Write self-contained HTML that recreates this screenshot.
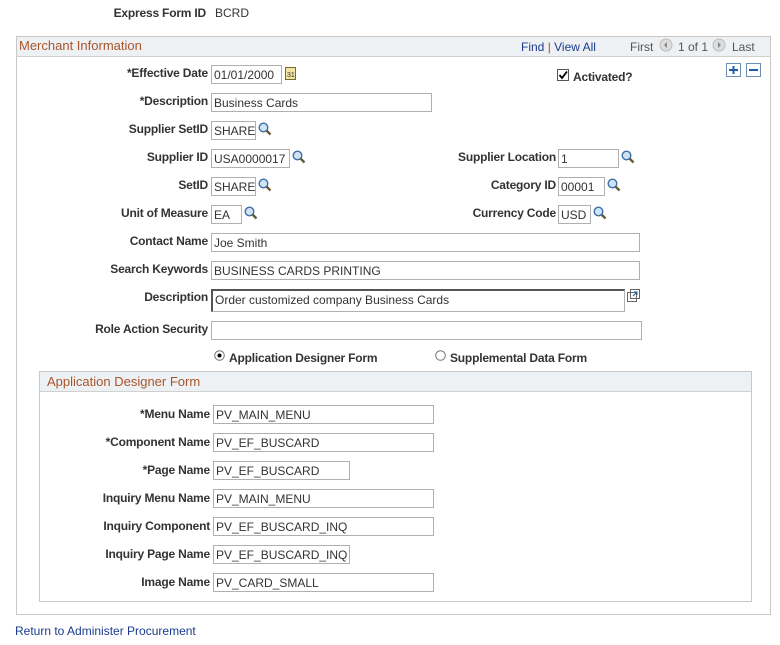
<!DOCTYPE html>
<html><head><style>
body{margin:0;width:780px;height:645px;background:#fff;font-family:"Liberation Sans",Arial,sans-serif;font-size:12px;color:#333;position:relative;overflow:hidden}
.a{position:absolute;white-space:nowrap}
.l{position:absolute;font-weight:bold;text-align:right;white-space:nowrap;color:#333;letter-spacing:-0.2px}
.i{position:absolute;border:1px solid #b0b0b0;box-sizing:border-box;height:19px;padding:2px 2px 0;font-size:12px;color:#333;background:#fff;white-space:nowrap;overflow:hidden}
.box{position:absolute;border:1px solid #c8c8c8}
.hd{position:absolute;background:#eef1f3;border-bottom:1px solid #d0d0d0;color:#a8552c;font-size:13px}
.mg{position:absolute;width:14px;height:14px}
a{color:#1a3b8f;text-decoration:none}
</style></head><body>
<svg width="0" height="0" style="position:absolute"><defs><g id="mg"><circle cx="5.5" cy="5.5" r="4.3" fill="#cfe3f5" stroke="#3b6fa8" stroke-width="1.4"/><line x1="8.6" y1="8.6" x2="12.5" y2="12.5" stroke="#6b5a3a" stroke-width="2.4"/></g></defs></svg>
<div class="l" style="left:0;width:206px;top:6px">Express Form ID</div>
<div class="a" style="left:215px;top:6px">BCRD</div>

<div class="box" style="left:16px;top:36px;width:753px;height:577px"></div>
<div class="hd" style="left:17px;top:37px;width:753px;height:19px"><span class="a" style="left:2px;top:1px">Merchant Information</span>
<span class="a" style="left:504px;top:3px;color:#1a3b8f;font-size:12px">Find <span style="color:#b5501e">|</span> View All</span>
<span class="a" style="left:613px;top:3px;color:#555;font-size:12px">First</span>
<svg class="a" style="left:642px;top:1px" width="14" height="14"><circle cx="7" cy="7" r="6" fill="#ddd" stroke="#bbb"/><path d="M8 4 5 7 8 10z" fill="#888"/></svg>
<span class="a" style="left:661px;top:3px;color:#555;font-size:12px">1 of 1</span>
<svg class="a" style="left:695px;top:1px" width="14" height="14"><circle cx="7" cy="7" r="6" fill="#ddd" stroke="#bbb"/><path d="M6 4 9 7 6 10z" fill="#888"/></svg>
<span class="a" style="left:715px;top:3px;color:#555;font-size:12px">Last</span></div>
<svg class="a" style="left:726px;top:63px" width="16" height="14"><rect x=".5" y=".5" width="14" height="13" fill="#fff" stroke="#6b8fb5"/><path d="M3 7h9M7.5 3v8" stroke="#1f5fa8" stroke-width="2"/></svg>
<svg class="a" style="left:746px;top:63px" width="16" height="14"><rect x=".5" y=".5" width="14" height="13" fill="#fff" stroke="#6b8fb5"/><path d="M3 7h9" stroke="#1f5fa8" stroke-width="2"/></svg>

<div class="l" style="left:0;width:208px;top:66px">*Effective Date</div><div class="i" style="left:211px;top:65px;width:71px">01/01/2000</div>
<svg class="a" style="left:285px;top:67px" width="12" height="13"><rect x=".5" y=".5" width="10" height="12" fill="#f2e4a0" stroke="#7a6a30"/><text x="2" y="10" font-size="7" font-family="Liberation Sans" fill="#333">31</text></svg>
<svg class="a" style="left:557px;top:69px" width="12" height="12"><rect x=".5" y=".5" width="11" height="11" fill="#fff" stroke="#555"/><path d="M2.5 6 5 9 10 2.5" stroke="#000" stroke-width="1.8" fill="none"/></svg>
<div class="a" style="left:573px;top:70px;font-weight:bold;letter-spacing:-0.2px">Activated?</div>

<div class="l" style="left:0;width:208px;top:94px">*Description</div><div class="i" style="left:211px;top:93px;width:221px">Business Cards</div>
<div class="l" style="left:0;width:208px;top:122px">Supplier SetID</div><div class="i" style="left:211px;top:121px;width:45px">SHARE</div><svg class="mg" style="left:258px;top:122px"><use href="#mg"/></svg>
<div class="l" style="left:0;width:208px;top:150px">Supplier ID</div><div class="i" style="left:211px;top:149px;width:79px">USA0000017</div><svg class="mg" style="left:292px;top:150px"><use href="#mg"/></svg>
<div class="l" style="left:0;width:556px;top:150px">Supplier Location</div><div class="i" style="left:558px;top:149px;width:61px">1</div><svg class="mg" style="left:621px;top:150px"><use href="#mg"/></svg>
<div class="l" style="left:0;width:208px;top:178px">SetID</div><div class="i" style="left:211px;top:177px;width:45px">SHARE</div><svg class="mg" style="left:258px;top:178px"><use href="#mg"/></svg>
<div class="l" style="left:0;width:556px;top:178px">Category ID</div><div class="i" style="left:558px;top:177px;width:47px">00001</div><svg class="mg" style="left:607px;top:178px"><use href="#mg"/></svg>
<div class="l" style="left:0;width:208px;top:206px">Unit of Measure</div><div class="i" style="left:211px;top:205px;width:31px">EA</div><svg class="mg" style="left:244px;top:206px"><use href="#mg"/></svg>
<div class="l" style="left:0;width:556px;top:206px">Currency Code</div><div class="i" style="left:558px;top:205px;width:33px">USD</div><svg class="mg" style="left:593px;top:206px"><use href="#mg"/></svg>
<div class="l" style="left:0;width:208px;top:234px">Contact Name</div><div class="i" style="left:211px;top:233px;width:429px">Joe Smith</div>
<div class="l" style="left:0;width:208px;top:262px">Search Keywords</div><div class="i" style="left:211px;top:261px;width:429px">BUSINESS CARDS PRINTING</div>
<div class="l" style="left:0;width:208px;top:290px">Description</div><div class="i" style="left:211px;top:289px;width:414px;height:23px;border-top:2px solid #555;border-left:2px solid #555">Order customized company Business Cards</div>
<svg class="a" style="left:627px;top:289px" width="13" height="13"><rect x="3.5" y=".5" width="9" height="9" fill="#fff" stroke="#666"/><rect x=".5" y="3.5" width="9" height="9" fill="none" stroke="#666"/><path d="M6 7 10 3M7 3h3v3" stroke="#1f5fa8" fill="none"/></svg>
<div class="l" style="left:0;width:208px;top:322px">Role Action Security</div><div class="i" style="left:211px;top:321px;width:431px"></div>
<svg class="a" style="left:214px;top:350px" width="11" height="11"><circle cx="5.5" cy="5.5" r="4.8" fill="#fff" stroke="#777"/><circle cx="5.5" cy="5.5" r="2" fill="#000"/></svg>
<div class="a" style="left:229px;top:351px;font-weight:bold;letter-spacing:-0.2px">Application Designer Form</div>
<svg class="a" style="left:435px;top:350px" width="11" height="11"><circle cx="5.5" cy="5.5" r="4.8" fill="#fff" stroke="#777"/></svg>
<div class="a" style="left:450px;top:351px;font-weight:bold;letter-spacing:-0.2px">Supplemental Data Form</div>

<div class="box" style="left:39px;top:371px;width:711px;height:229px"></div>
<div class="hd" style="left:40px;top:372px;width:711px;height:19px"><span class="a" style="left:7px;top:2px">Application Designer Form</span></div>
<div class="l" style="left:0;width:210px;top:407px">*Menu Name</div><div class="i" style="left:213px;top:405px;width:221px">PV_MAIN_MENU</div>
<div class="l" style="left:0;width:210px;top:435px">*Component Name</div><div class="i" style="left:213px;top:433px;width:221px">PV_EF_BUSCARD</div>
<div class="l" style="left:0;width:210px;top:463px">*Page Name</div><div class="i" style="left:213px;top:461px;width:137px">PV_EF_BUSCARD</div>
<div class="l" style="left:0;width:210px;top:491px">Inquiry Menu Name</div><div class="i" style="left:213px;top:489px;width:221px">PV_MAIN_MENU</div>
<div class="l" style="left:0;width:210px;top:519px">Inquiry Component</div><div class="i" style="left:213px;top:517px;width:221px">PV_EF_BUSCARD_INQ</div>
<div class="l" style="left:0;width:210px;top:547px">Inquiry Page Name</div><div class="i" style="left:213px;top:545px;width:137px">PV_EF_BUSCARD_INQ</div>
<div class="l" style="left:0;width:210px;top:575px">Image Name</div><div class="i" style="left:213px;top:573px;width:221px">PV_CARD_SMALL</div>

<a class="a" style="left:15px;top:624px">Return to Administer Procurement</a>
</body></html>
